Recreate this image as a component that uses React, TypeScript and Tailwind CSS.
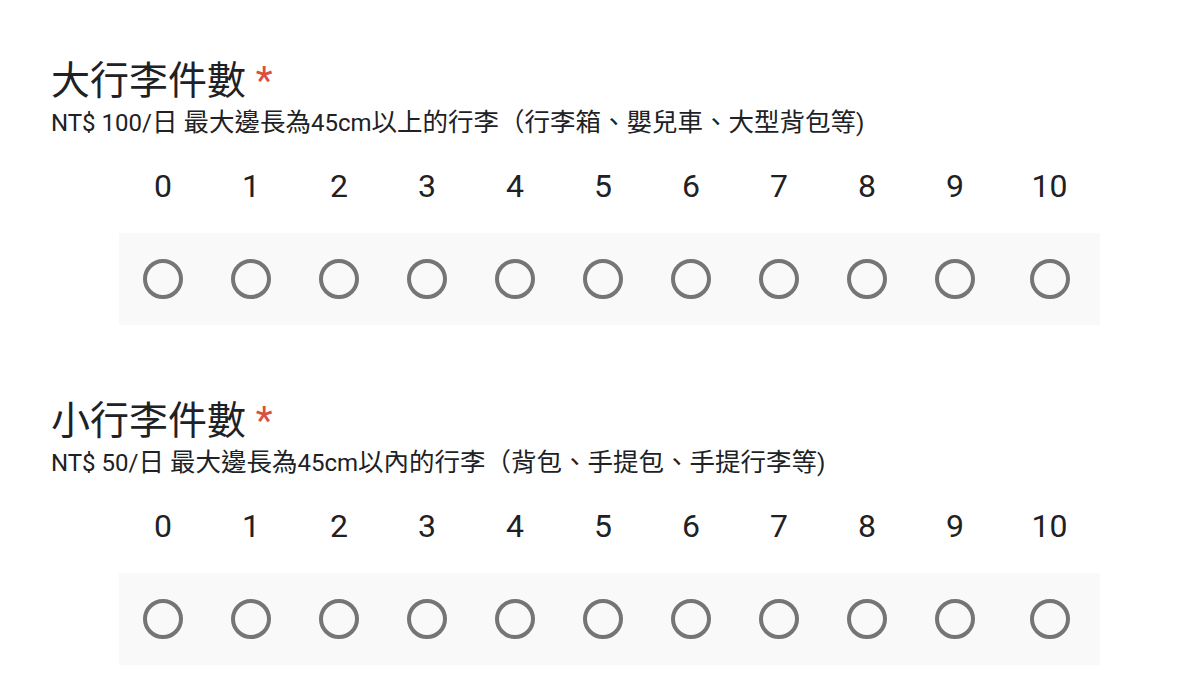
import React from "react";

const scale = [0, 1, 2, 3, 4, 5, 6, 7, 8, 9, 10];

// CJK glyphs in the shot are set larger than the latin ones
const MixedText = ({ text }: { text: string }) => {
  const parts = text.split(/([\u3000-\u303f\u3400-\u9fff\uff00-\uffef]+)/);
  return (
    <>
      {parts.map((part, i) =>
        i % 2 === 1 ? (
          <span key={i} className="text-[25.5px]">
            {part}
          </span>
        ) : (
          <span key={i}>{part}</span>
        )
      )}
    </>
  );
};

interface QuestionProps {
  title: string;
  desc: string;
  className?: string;
}

const Question = ({ title, desc, className = "" }: QuestionProps) => {
  return (
    <div className={className}>
      <h2 className="text-[39px] leading-[46px] font-normal text-[#202124]">
        {title} <span className="text-[#d9503f]">*</span>
      </h2>
      <p className="mt-[3px] text-[24px] leading-[30px] text-[#202124]">
        <MixedText text={desc} />
      </p>
      {/* scale labels */}
      <div className="ml-[68px] mt-[29px] flex w-[981px] text-[32px] leading-[38px] text-[#202124]">
        {scale.map((n) => (
          <div
            key={n}
            className={n === 10 ? "flex-1 text-center" : "w-[88px] text-center"}
          >
            {n}
          </div>
        ))}
      </div>
      {/* radios */}
      <div className="ml-[68px] mt-[28px] flex h-[92px] w-[981px] items-center bg-[#f9f9f9]">
        {scale.map((n) => (
          <div
            key={n}
            className={
              n === 10
                ? "flex flex-1 justify-center"
                : "flex w-[88px] justify-center"
            }
          >
            <div className="h-[40px] w-[40px] rounded-full border-[4px] border-[#757575]" />
          </div>
        ))}
      </div>
    </div>
  );
};

export default function App() {
  return (
    <div className="min-h-screen bg-white pl-[51px] pt-[58px] font-[family-name:Roboto,'Noto_Sans_CJK_TC',sans-serif]">
      <Question
        title="大行李件數"
        desc="NT$ 100/日 最大邊長為45cm以上的行李（行李箱、嬰兒車、大型背包等)"
      />
      <Question
        className="mt-[73px]"
        title="小行李件數"
        desc="NT$ 50/日 最大邊長為45cm以內的行李（背包、手提包、手提行李等)"
      />
    </div>
  );
}
